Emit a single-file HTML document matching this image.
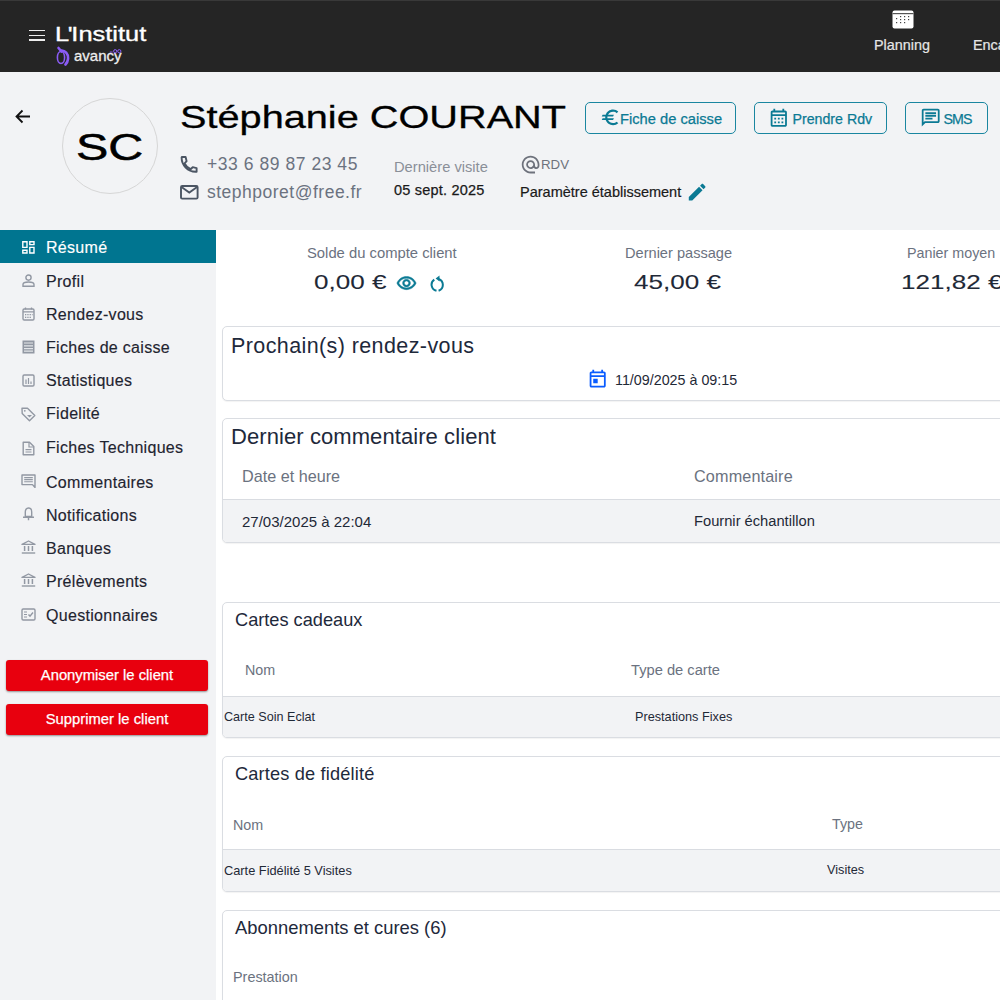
<!DOCTYPE html>
<html><head><meta charset="utf-8">
<style>
*{margin:0;padding:0;box-sizing:border-box}
html,body{width:1000px;height:1000px;overflow:hidden;background:#f2f3f5;font-family:"Liberation Sans",sans-serif;color:#1f2937}
.a{position:absolute;white-space:nowrap}
#hdr{position:absolute;left:0;top:0;width:1000px;height:71.6px;background:#252525;box-shadow:inset 0 1px 0 #393939}
#side{position:absolute;left:0;top:230px;width:216px;height:770px;background:#f2f3f5}
#main{position:absolute;left:216px;top:230px;width:784px;height:770px;background:#fff}
.nt{position:absolute;left:46px;font-size:16px;line-height:0;height:0;letter-spacing:0.3px;-webkit-text-stroke:0.15px currentColor}
.nav .t{position:absolute;left:46px;font-size:16px;color:#1f2937}
.nav svg{position:absolute;left:21px}
.btn{position:absolute;height:32px;top:102px;border:1.8px solid #1a86a0;border-radius:5px;color:#0b7a94;font-size:14.5px;-webkit-text-stroke:0.25px #0b7a94}
.btn .t{position:absolute;top:7.8px}
.red{position:absolute;left:6px;width:202px;height:31px;background:#e8000e;border-radius:3px;color:#fff;font-size:14.8px;-webkit-text-stroke:0.25px #fff;text-align:center;line-height:31px;box-shadow:0 1px 2px rgba(0,0,0,.4)}
.card{position:absolute;left:222px;width:900px;background:#fff;border:1px solid #dadde2;border-radius:5px;box-shadow:0 1px 1px rgba(0,0,0,.05)}
.lbl{color:#6b7280}
</style></head><body>
<div id="hdr">
  <!-- hamburger -->
  <div class="a" style="left:28.5px;top:29.6px;width:16.5px;height:1.7px;background:#eee"></div>
  <div class="a" style="left:28.5px;top:34.5px;width:16.5px;height:1.7px;background:#eee"></div>
  <div class="a" style="left:28.5px;top:39.3px;width:16.5px;height:1.7px;background:#eee"></div>
  <div class="a" style="left:55px;top:21.5px;font-size:21px;color:#fff;transform:scaleX(1.21);transform-origin:left top;-webkit-text-stroke:0.35px #fff"><span style="letter-spacing:-1.1px">L'</span>Institut</div>
  <svg class="a" style="left:56px;top:46px" width="15" height="20" viewBox="0 0 15 20"><path d="M2.5 2 L5.5 5.5" stroke="#8b5cf6" stroke-width="2.6" stroke-linecap="round"/><ellipse cx="5" cy="11.5" rx="3.6" ry="6" fill="none" stroke="#8b5cf6" stroke-width="1.6"/><path d="M5 4.5 C9 4 12.5 8 12 13 C11.7 16 10.5 17.5 9.5 18.5" fill="none" stroke="#8b5cf6" stroke-width="2.6" stroke-linecap="round"/></svg>
  <div class="a" style="left:74px;top:46.7px;font-size:15px;color:#eee;-webkit-text-stroke:0.3px #eee">avancy</div><svg class="a" style="left:109px;top:47.5px" width="13" height="6" viewBox="0 0 13 6"><path d="M0.8 4H3.6" stroke="#8b5cf6" stroke-width="0.9"/><circle cx="6.2" cy="3.2" r="1.6" fill="none" stroke="#8b5cf6" stroke-width="1"/><circle cx="10.3" cy="3.2" r="1.6" fill="none" stroke="#8b5cf6" stroke-width="1"/></svg>
  <!-- Planning -->
  <svg class="a" style="left:892px;top:10px" width="22" height="19" viewBox="0 0 22 19"><rect x="0.5" y="0.5" width="21" height="18" rx="2" fill="#fff"/><rect x="0.5" y="3" width="21" height="1.2" fill="#555"/><g fill="#444"><rect x="4" y="8" width="1.2" height="1.2"/><rect x="8" y="6" width="1.2" height="1.2"/><rect x="12" y="6" width="1.2" height="1.2"/><rect x="16" y="6" width="1.2" height="1.2"/><rect x="8" y="9" width="1.2" height="1.2"/><rect x="12" y="9" width="1.2" height="1.2"/><rect x="16" y="9" width="1.2" height="1.2"/><rect x="4" y="12" width="1.2" height="1.2"/><rect x="8" y="12" width="1.2" height="1.2"/><rect x="12" y="12" width="1.2" height="1.2"/></g></svg>
  <div class="a" style="left:874px;top:37px;font-size:14.4px;color:#e6e6e6;-webkit-text-stroke:0.2px #e6e6e6">Planning</div>
  <div class="a" style="left:973px;top:37px;font-size:14.4px;color:#e6e6e6;-webkit-text-stroke:0.2px #e6e6e6">Encaissement</div>
</div>

<!-- client header -->
<svg class="a" style="left:15px;top:109px" width="16" height="15" viewBox="0 0 16 15"><path d="M15 7.5H2M7.5 1.5L1.5 7.5L7.5 13.5" fill="none" stroke="#111" stroke-width="1.8"/></svg>
<div class="a" style="left:62px;top:98px;width:96px;height:96px;border-radius:50%;border:1px solid #d6d6d6"></div>
<div class="a" style="left:76px;top:125.5px;font-size:37.5px;color:#000;transform:scaleX(1.29);transform-origin:left top;-webkit-text-stroke:0.55px #000">SC</div>
<div class="a" style="left:180px;top:99px;font-size:31.5px;color:#000;transform:scaleX(1.26);transform-origin:left top;-webkit-text-stroke:0.3px #000">Stéphanie COURANT</div>

<svg class="a" style="left:180px;top:156px" width="18" height="17" viewBox="0 0 18 17"><path d="M1.8 1 H5.6 L6.6 5.2 L4.6 7.3 C5.9 9.9 7.9 11.9 10.6 13.2 L12.7 11.2 L16.6 12.2 V15.7 H15.6 C7.8 15.7 1.6 9.4 1.6 1.6 Z" fill="none" stroke="#4b5563" stroke-width="1.9" stroke-linejoin="round"/></svg>
<div class="a lbl" style="left:207px;top:154px;font-size:17.5px;letter-spacing:0.55px">+33 6 89 87 23 45</div>
<svg class="a" style="left:180px;top:185px" width="19" height="15" viewBox="0 0 19 15"><rect x="1" y="1" width="16.6" height="12.6" rx="1.2" fill="none" stroke="#4b5563" stroke-width="1.9"/><path d="M1.5 2 L9.3 7.6 L17.1 2" fill="none" stroke="#4b5563" stroke-width="1.8"/></svg>
<div class="a lbl" style="left:207px;top:182px;font-size:17.5px;letter-spacing:0.5px">stephporet@free.fr</div>

<div class="a" style="left:394px;top:158.5px;font-size:14.7px;color:#8a8f98">Dernière visite</div>
<div class="a" style="left:394px;top:182px;font-size:14.5px;color:#1a1a1a;letter-spacing:0.2px;-webkit-text-stroke:0.25px #1a1a1a">05 sept. 2025</div>

<svg class="a" style="left:519.8px;top:153.7px" width="21.2" height="21.2" viewBox="0 0 24 24"><path d="M12 1.95c-5.52 0-10 4.48-10 10s4.48 10 10 10h5v-2h-5c-4.34 0-8-3.66-8-8s3.66-8 8-8 8 3.66 8 8v1.43c0 .79-.71 1.57-1.5 1.57s-1.5-.78-1.5-1.57v-1.43c0-2.76-2.24-5-5-5s-5 2.24-5 5 2.24 5 5 5c1.38 0 2.64-.56 3.54-1.47.65.89 1.77 1.47 2.96 1.47 1.97 0 3.5-1.6 3.5-3.57v-1.43c0-5.52-4.48-10-10-10zm0 13c-1.66 0-3-1.34-3-3s1.34-3 3-3 3 1.34 3 3-1.34 3-3 3z" fill="#6e727c"/></svg>
<div class="a" style="left:541px;top:157px;font-size:13.3px;color:#6e727c">RDV</div>
<div class="a" style="left:520px;top:184px;font-size:14.5px;color:#1a1a1a;-webkit-text-stroke:0.2px #1a1a1a">Paramètre établissement</div>
<svg class="a" style="left:685.8px;top:181px" width="22.3" height="22.3" viewBox="0 0 24 24"><path d="M3 17.25V21h3.75L17.81 9.94l-3.75-3.75L3 17.25zM20.71 7.04c.39-.39.39-1.02 0-1.41l-2.34-2.34c-.39-.39-1.02-.39-1.41 0l-1.83 1.83 3.75 3.75 1.83-1.83z" fill="#0b7a94"/></svg>

<!-- buttons -->
<div class="btn" style="left:585px;width:151px">
  <svg class="a" style="left:13.8px;top:4.3px" width="20.9" height="20.9" viewBox="0 0 24 24"><path d="M15 18.5c-2.51 0-4.68-1.42-5.76-3.5H15l1-2H8.58c-.05-.33-.08-.66-.08-1s.03-.67.08-1H15l1-2H9.24C10.32 6.92 12.5 5.5 15 5.5c1.61 0 3.090.59 4.23 1.57L21 5.3C19.41 3.87 17.3 3 15 3c-3.92 0-7.24 2.51-8.48 6H3l-1 2h4.06c-.04.33-.06.66-.06 1s.02.67.06 1H3l-1 2h4.52c1.24 3.49 4.56 6 8.48 6 2.310 0 4.410-.87 6-2.3l-1.78-1.77c-1.13.98-2.6 1.57-4.22 1.57z" fill="#0b7a94"/></svg>
  <div class="t" style="left:34px;font-size:14.7px">Fiche de caisse</div>
</div>
<div class="btn" style="left:754px;width:133px">
  <svg class="a" style="left:13.05px;top:4.2px" width="21.6" height="21.6" viewBox="0 0 24 24"><path d="M19 4h-1V2h-2v2H8V2H6v2H5c-1.11 0-1.99.9-1.99 2L3 20c0 1.1.89 2 2 2h14c1.1 0 2-.9 2-2V6c0-1.1-.9-2-2-2zm0 16H5V10h14v10zm0-12H5V6h14v2zM9 14H7v-2h2v2zm4 0h-2v-2h2v2zm4 0h-2v-2h2v2zm-8 4H7v-2h2v2zm4 0h-2v-2h2v2zm4 0h-2v-2h2v2z" fill="#0b7a94"/></svg>
  <div class="t" style="left:37.5px;font-size:14.2px">Prendre Rdv</div>
</div>
<div class="btn" style="left:905px;width:83px">
  <svg class="a" style="left:13.6px;top:4.2px" width="21.4" height="21.4" viewBox="0 0 24 24"><path d="M4 4h16v12H5.17L4 17.17V4m0-2c-1.1 0-1.99.9-1.99 2L2 22l4-4h14c1.1 0 2-.9 2-2V4c0-1.1-.9-2-2-2H4zm2 10h8v2H6v-2zm0-3h12v2H6V9zm0-3h12v2H6V6z" fill="#0b7a94"/></svg>
  <div class="t" style="left:37.5px;font-size:14.2px;letter-spacing:-0.9px">SMS</div>
</div>

<!-- sidebar -->
<div id="side"></div>
<div class="a" style="left:0;top:230px;width:216px;height:33px;background:#007590"></div>
<svg class="a" style="left:19.9px;top:239px" width="16.8" height="16.8" viewBox="0 0 24 24"><path d="M19 5v2h-4V5h4M9 5v6H5V5h4m10 8v6h-4v-6h4M9 17v2H5v-2h4M21 3h-8v6h8V3zM11 3H3v10h8V3zm10 8h-8v10h8V11zm-10 4H3v6h8v-6z" fill="#fff"/></svg>
<div class="a nt" style="top:248.1px;color:#fff">Résumé</div>
<div class="a nt" style="top:281.7px;color:#1f2430">Profil</div>
<svg style="left:21.5px;top:273.5px;position:absolute" width="13" height="13" viewBox="0 0 13 13"><circle cx="6.5" cy="3.6" r="2.6" fill="none" stroke="#9298a3" stroke-width="1.4"/><path d="M1 12.2V10.6C1 9 3.8 8 6.5 8S12 9 12 10.6V12.2Z" fill="none" stroke="#9298a3" stroke-width="1.4"/></svg>
<div class="a nt" style="top:314.8px;color:#1f2430">Rendez-vous</div>
<svg style="left:21.5px;top:306.5px;position:absolute" width="13" height="14" viewBox="0 0 13 14"><rect x="1" y="2" width="11" height="11" rx="1.2" fill="none" stroke="#9298a3" stroke-width="1.4"/><path d="M1 4.8H12M3.5 0.5V2.5M9.5 0.5V2.5" stroke="#9298a3" stroke-width="1.3"/><g fill="#9298a3"><rect x="3" y="7" width="1.3" height="1.3"/><rect x="5.3" y="7" width="1.3" height="1.3"/><rect x="7.6" y="7" width="1.3" height="1.3"/><rect x="9.8" y="7" width="1.3" height="1.3" opacity=".6"/><rect x="3" y="9.7" width="1.3" height="1.3"/><rect x="5.3" y="9.7" width="1.3" height="1.3"/><rect x="7.6" y="9.7" width="1.3" height="1.3"/></g></svg>
<div class="a nt" style="top:348.4px;color:#1f2430">Fiches de caisse</div>
<svg style="left:21.5px;top:340px;position:absolute" width="13" height="14" viewBox="0 0 13 14"><rect x="0.5" y="0.5" width="12" height="13" fill="#9298a3"/><path d="M2 3H11M2 5.8H11M2 8.6H11M2 11.2H11" stroke="#e4e6ea" stroke-width="1.2"/></svg>
<div class="a nt" style="top:380.8px;color:#1f2430">Statistiques</div>
<svg style="left:21.5px;top:374px;position:absolute" width="13" height="13" viewBox="0 0 13 13"><rect x="1" y="1" width="11" height="11" rx="1.2" fill="none" stroke="#9298a3" stroke-width="1.4"/><path d="M4 10V5.5M6.5 10V4M9 10V7.5" stroke="#9298a3" stroke-width="1.2"/></svg>
<div class="a nt" style="top:414.4px;color:#1f2430">Fidelité</div>
<svg style="left:21px;top:407px;position:absolute" width="15" height="15" viewBox="0 0 15 15"><path d="M1 1.2H6.5L13.8 8.5L8.5 13.8L1.2 6.5Z" fill="none" stroke="#9298a3" stroke-width="1.4" stroke-linejoin="round"/><circle cx="3.8" cy="3.8" r="0.9" fill="#9298a3"/><path d="M6 8H11L8.5 10.5Z" fill="#9298a3"/></svg>
<div class="a nt" style="top:448.0px;color:#1f2430">Fiches Techniques</div>
<svg style="left:22px;top:440.5px;position:absolute" width="13" height="15" viewBox="0 0 13 15"><path d="M1.2 1.2H7.5L11.8 5.5V13.8H1.2Z" fill="none" stroke="#9298a3" stroke-width="1.4" stroke-linejoin="round"/><path d="M7 1.5V6H11.5" fill="none" stroke="#9298a3" stroke-width="1.2"/><path d="M3.5 8.6H9.5M3.5 11H9.5" stroke="#9298a3" stroke-width="1.2"/></svg>
<div class="a nt" style="top:482.7px;color:#1f2430">Commentaires</div>
<svg style="left:21px;top:473.5px;position:absolute" width="15" height="14" viewBox="0 0 15 14"><path d="M1 1H14V13.5L11.5 10.6H1Z" fill="none" stroke="#9298a3" stroke-width="1.4" stroke-linejoin="round"/><path d="M3.2 3.6H11.8M3.2 5.6H11.8M3.2 7.8H11.8" stroke="#9298a3" stroke-width="1.1"/></svg>
<div class="a nt" style="top:516.2px;color:#1f2430">Notifications</div>
<svg style="left:21.5px;top:507px;position:absolute" width="13" height="14" viewBox="0 0 13 14"><path d="M6.5 1C4.2 1 3.3 3 3.3 5V9.5H9.7V5C9.7 3 8.8 1 6.5 1Z" fill="none" stroke="#9298a3" stroke-width="1.4"/><path d="M1 10.2H12M6.5 10.5V13.2" stroke="#9298a3" stroke-width="1.4"/></svg>
<div class="a nt" style="top:548.7px;color:#1f2430">Banques</div>
<svg style="left:20.5px;top:539.5px;position:absolute" width="15" height="14" viewBox="0 0 15 14"><path d="M1 4.4L7.5 1L14 4.4Z" fill="none" stroke="#9298a3" stroke-width="1.3" stroke-linejoin="round"/><path d="M3.6 6V11M7.5 6V11M11.4 6V11" stroke="#9298a3" stroke-width="1.5"/><path d="M0.8 13H14.2" stroke="#9298a3" stroke-width="1.4"/></svg>
<div class="a nt" style="top:581.7px;color:#1f2430">Prélèvements</div>
<svg style="left:20.5px;top:573.3px;position:absolute" width="15" height="14" viewBox="0 0 15 14"><path d="M1 4.4L7.5 1L14 4.4Z" fill="none" stroke="#9298a3" stroke-width="1.3" stroke-linejoin="round"/><path d="M3.6 6V11M7.5 6V11M11.4 6V11" stroke="#9298a3" stroke-width="1.5"/><path d="M0.8 13H14.2" stroke="#9298a3" stroke-width="1.4"/></svg>
<div class="a nt" style="top:615.6px;color:#1f2430">Questionnaires</div>
<svg style="left:21px;top:608px;position:absolute" width="15" height="13" viewBox="0 0 15 13"><rect x="1" y="1" width="13" height="11" rx="1.2" fill="none" stroke="#9298a3" stroke-width="1.4"/><path d="M3 4H6M3 6.5H6M3 9H6" stroke="#9298a3" stroke-width="1.1"/><path d="M7.5 6.5L9 8.2L12 4.5" fill="none" stroke="#9298a3" stroke-width="1.4"/></svg>
<div class="red" style="top:659.5px">Anonymiser le client</div>
<div class="red" style="top:704px">Supprimer le client</div>

<div id="main"></div>

<!-- stats -->
<div class="a lbl" style="left:307px;top:245px;font-size:14.8px">Solde du compte client</div>
<div class="a" style="left:314px;top:270px;font-size:21px;color:#1f2937;transform:scaleX(1.24);transform-origin:left top;-webkit-text-stroke:0.1px #1f2937">0,00 €</div>
<svg class="a" style="left:396px;top:273.4px" width="21" height="21" viewBox="0 0 24 24"><path stroke="#0b7a94" stroke-width="0.5" d="M12 6c3.79 0 7.17 2.13 8.82 5.5C19.17 14.87 15.79 17 12 17s-7.170-2.13-8.820-5.5C4.83 8.13 8.21 6 12 6m0-2C7 4 2.73 7.11 1 11.5 2.73 15.89 7 19 12 19s9.27-3.11 11-7.5C21.27 7.11 17 4 12 4zm0 5c1.38 0 2.5 1.12 2.5 2.5S13.38 14 12 14s-2.5-1.12-2.5-2.5S10.62 9 12 9m0-2c-2.48 0-4.5 2.02-4.5 4.5S9.52 16 12 16s4.5-2.02 4.5-4.5S14.48 7 12 7z" fill="#0b7a94"/></svg>
<svg class="a" style="left:430px;top:275px" width="16" height="18" viewBox="0 0 16 18"><path d="M6.5 15.8 A6.2 6.2 0 0 1 4.3 4.6" fill="none" stroke="#0b7a94" stroke-width="2"/><path d="M8.5 4.0 A6.2 6.2 0 0 1 8.6 15.8" fill="none" stroke="#0b7a94" stroke-width="2"/><path d="M5.6 3.6 L9.5 0.6 L9.6 6.6 Z" fill="#0b7a94"/></svg>
<div class="a lbl" style="left:625px;top:245px;font-size:14.6px">Dernier passage</div>
<div class="a" style="left:634px;top:270px;font-size:21px;color:#1f2937;transform:scaleX(1.24);transform-origin:left top;-webkit-text-stroke:0.1px #1f2937">45,00 €</div>
<div class="a lbl" style="left:907px;top:245px;font-size:14.3px">Panier moyen</div>
<div class="a" style="left:901px;top:270px;font-size:21px;color:#1f2937;transform:scaleX(1.24);transform-origin:left top;-webkit-text-stroke:0.1px #1f2937">121,82 €</div>

<!-- cards -->
<div class="card" style="top:326px;height:75px"></div>
<div class="a" style="left:231px;top:333.5px;font-size:21.5px;color:#1e293b;letter-spacing:0.4px">Prochain(s) rendez-vous</div>
<svg class="a" style="left:587.3px;top:368.2px" width="21.4" height="21.4" viewBox="0 0 24 24"><path d="M19 4h-1V2h-2v2H8V2H6v2H5c-1.11 0-1.99.9-1.99 2L3 20c0 1.1.89 2 2 2h14c1.1 0 2-.9 2-2V6c0-1.1-.9-2-2-2zm0 16H5V10h14v10zm0-12H5V6h14v2zM7 12h5v5H7z" fill="#0a5cff"/></svg>
<div class="a" style="left:615px;top:372px;font-size:14.3px;color:#1f2937">11/09/2025 à 09:15</div>

<div class="card" style="top:418px;height:125px;overflow:hidden"><div style="position:absolute;left:0;right:0;top:80px;bottom:0;background:#f2f3f5;border-top:1px solid #d9dce1"></div></div>
<div class="a" style="left:231px;top:424px;font-size:22px;color:#1e293b;letter-spacing:0.08px">Dernier commentaire client</div>
<div class="a lbl" style="left:242px;top:466.7px;font-size:16.2px">Date et heure</div>
<div class="a lbl" style="left:694px;top:466.7px;font-size:16.2px;letter-spacing:0.15px">Commentaire</div>
<div class="a" style="left:242px;top:512.7px;font-size:15px;color:#1f2937">27/03/2025 à 22:04</div>
<div class="a" style="left:694px;top:512.7px;font-size:14.7px;color:#1f2937">Fournir échantillon</div>

<div class="card" style="top:602px;height:136px;overflow:hidden"><div style="position:absolute;left:0;right:0;top:93px;bottom:0;background:#f2f3f5;border-top:1px solid #d9dce1"></div></div>
<div class="a" style="left:235px;top:610px;font-size:18.2px;color:#1e293b">Cartes cadeaux</div>
<div class="a lbl" style="left:245px;top:662px;font-size:14.3px">Nom</div>
<div class="a lbl" style="left:631px;top:662px;font-size:14.7px">Type de carte</div>
<div class="a" style="left:224px;top:709.5px;font-size:12.6px;color:#1f2937">Carte Soin Eclat</div>
<div class="a" style="left:635px;top:709.5px;font-size:12.7px;color:#1f2937">Prestations Fixes</div>

<div class="card" style="top:756px;height:136px;overflow:hidden"><div style="position:absolute;left:0;right:0;top:92px;bottom:0;background:#f2f3f5;border-top:1px solid #d9dce1"></div></div>
<div class="a" style="left:235px;top:764px;font-size:18.2px;color:#1e293b;letter-spacing:0.17px">Cartes de fidélité</div>
<div class="a lbl" style="left:233px;top:817px;font-size:14.3px">Nom</div>
<div class="a lbl" style="left:832px;top:816px;font-size:14.3px">Type</div>
<div class="a" style="left:224px;top:863px;font-size:12.8px;color:#1f2937">Carte Fidélité 5 Visites</div>
<div class="a" style="left:827px;top:863px;font-size:12.7px;color:#1f2937">Visites</div>

<div class="card" style="top:910px;height:120px"></div>
<div class="a" style="left:235px;top:917px;font-size:18.4px;color:#1e293b">Abonnements et cures (6)</div>
<div class="a lbl" style="left:233px;top:969px;font-size:14.4px">Prestation</div>
</body></html>
